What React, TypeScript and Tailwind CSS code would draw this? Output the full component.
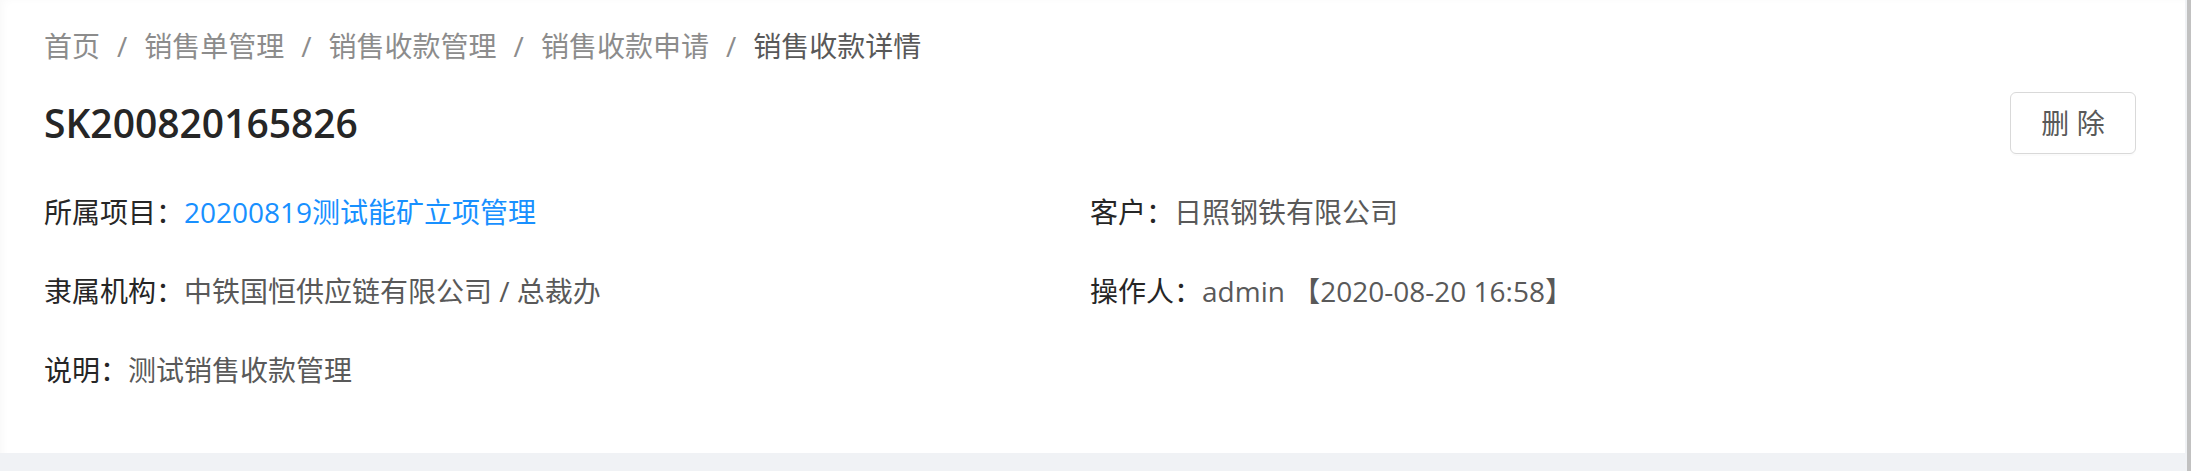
const crumbs = ["首页", "销售单管理", "销售收款管理", "销售收款申请", "销售收款详情"];

const Field = ({ label, children }: { label: string; children: React.ReactNode }) => (
  <div className="flex items-center leading-[42px]">
    <span className="text-[#262626]">{label}：</span>
    <span className="text-[#595959]">{children}</span>
  </div>
);

const App = () => {
  return (
    <div className="flex h-[471px] w-[2191px] overflow-hidden bg-[#f0f2f5] font-['Open_Sans','Noto_Sans_CJK_SC',sans-serif] text-[28px]">
      <div className="flex-1 pr-[2px]">
        <div className="h-[453px] bg-white pl-[44px] pr-[49px] pt-[25px] shadow-[inset_10px_6px_10px_-8px_rgba(0,0,0,0.03)]">
          {/* breadcrumb */}
          <nav className="flex items-center leading-[42px]">
            {crumbs.map((c, i) => (
              <span key={c} className="flex items-center">
                <span className={i === crumbs.length - 1 ? "text-[#595959]" : "text-[#8c8c8c]"}>{c}</span>
                {i < crumbs.length - 1 && <span className="mx-[17px] text-[#8c8c8c]">/</span>}
              </span>
            ))}
          </nav>

          <div className="mt-[25px] flex items-center justify-between">
            <h1 className="text-[39px] font-semibold leading-[62px] text-[#262626]">SK200820165826</h1>
            <button className="h-[62px] w-[126px] rounded-[6px] border border-[#d9d9d9] bg-white text-[#595959] shadow-[0_2px_0_rgba(0,0,0,0.015)]">
              删 除
            </button>
          </div>

          <div className="mt-[37px] grid grid-cols-2 gap-y-[37px]">
            <Field label="所属项目">
              <span className="text-[#1890ff]">20200819测试能矿立项管理</span>
            </Field>
            <Field label="客户">日照钢铁有限公司</Field>
            <Field label="隶属机构">中铁国恒供应链有限公司 / 总裁办</Field>
            <Field label="操作人">admin 【2020-08-20 16:58】</Field>
            <Field label="说明">测试销售收款管理</Field>
          </div>
        </div>
      </div>
      <div className="w-[4px] bg-[#c1c1c1]" />
    </div>
  );
};

export default App;
